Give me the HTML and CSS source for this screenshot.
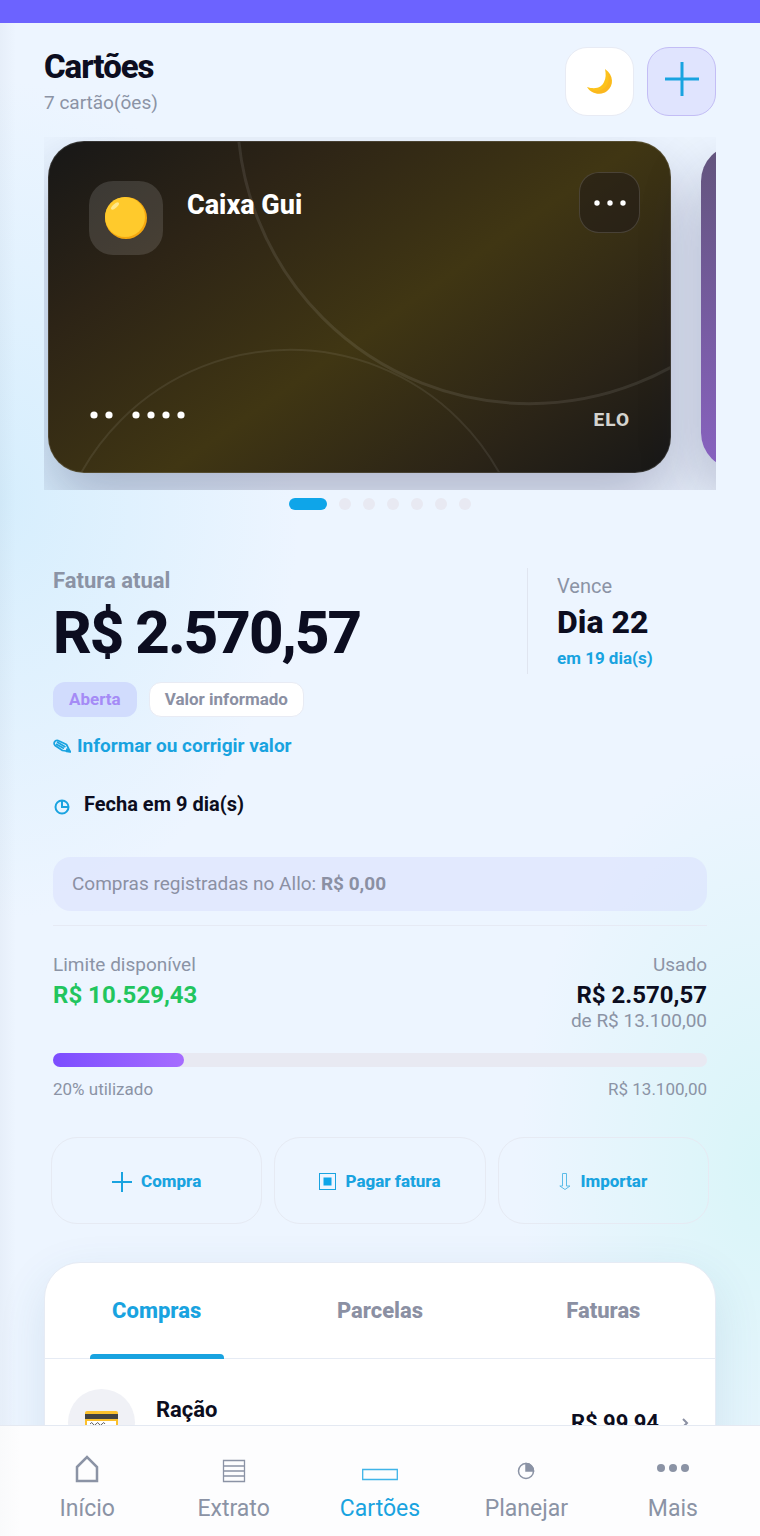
FILE: index.html
```html
<!DOCTYPE html>
<html lang="pt-BR">
<head>
    <meta charset="UTF-8">
    <meta name="viewport" content="width=device-width, initial-scale=1.0">
    <title>Cartões</title>
    <link rel="stylesheet" href="styles.css">
</head>
<body>
    <div class="status-bar"></div>

    <main class="page">
        <header class="header">
            <div>
                <h1 class="title">Cartões</h1>
                <p class="subtitle">7 cartão(ões)</p>
            </div>
            <div class="header-actions">
                <button type="button" class="icon-btn" aria-label="Tema escuro">
                    <svg width="28" height="28" viewBox="0 0 28 28">
                        <path d="M19 1c9 6 9 17 2 22-6 5-16 3-20-4 9 3 15 0 17-5 2-4 2-8 1-13z" fill="#fcc21b"/>
                        <path d="M22 4c5 7 4 15-1 19-5 4-13 3-17-1 8 2 14 0 17-5 2-4 2-8 1-13z" fill="#f9a825" opacity=".4"/>
                    </svg>
                </button>
                <button type="button" class="icon-btn icon-btn-add" aria-label="Novo cartão">
                    <svg width="34" height="34" viewBox="0 0 34 34" stroke="#19a3e0" stroke-width="3">
                        <path d="M17 0v34M0 17h34"/>
                    </svg>
                </button>
            </div>
        </header>

        <section class="carousel">
            <article class="card">
                <svg class="card-art" viewBox="0 0 623 332" preserveAspectRatio="xMidYMid slice" fill="none" stroke="#fff">
                    <circle cx="482" cy="-30" r="293" stroke-width="3" stroke-opacity=".09"/>
                    <circle cx="242" cy="449" r="240" stroke-width="2" stroke-opacity=".08"/>
                </svg>
                <div class="card-top">
                    <div class="card-avatar">
                        <svg width="42" height="42" viewBox="0 0 42 42">
                            <circle cx="21" cy="21" r="21" fill="#f4a70f"/>
                            <circle cx="20" cy="20" r="20" fill="#ffca2c"/>
                            <ellipse cx="10" cy="9" rx="5" ry="2" transform="rotate(-42 10 9)" fill="#ffe88a"/>
                        </svg>
                    </div>
                    <h2 class="card-name">Caixa Gui</h2>
                    <button type="button" class="card-menu" aria-label="Opções do cartão">
                        <svg width="32" height="6" viewBox="0 0 32 6" fill="#fff">
                            <circle cx="3" cy="3" r="2.700"/><circle cx="16" cy="3" r="2.700"/><circle cx="29" cy="3" r="2.700"/>
                        </svg>
                    </button>
                </div>
                <div class="card-bottom">
                    <svg width="98" height="14" viewBox="0 0 98 14" fill="#fff" role="img" aria-label="Número oculto">
                        <circle cx="5" cy="7" r="3.600"/><circle cx="20" cy="7" r="3.600"/>
                        <circle cx="47" cy="7" r="3.600"/><circle cx="62" cy="7" r="3.600"/>
                        <circle cx="77" cy="7" r="3.600"/><circle cx="92" cy="7" r="3.600"/>
                    </svg>
                    <span class="card-brand">ELO</span>
                </div>
            </article>
            <article class="card card-next"></article>
        </section>

        <div class="dots">
            <span class="dot dot-active"></span>
            <span class="dot"></span>
            <span class="dot"></span>
            <span class="dot"></span>
            <span class="dot"></span>
            <span class="dot"></span>
            <span class="dot"></span>
        </div>

        <section class="invoice">
            <div class="invoice-head">
                <div class="invoice-main">
                    <p class="invoice-label">Fatura atual</p>
                    <p class="invoice-amount">R$ 2.570,57</p>
                </div>
                <div class="due">
                    <p class="muted due-label">Vence</p>
                    <p class="due-day">Dia 22</p>
                    <p class="due-in">em 19 dia(s)</p>
                </div>
            </div>

            <div class="tags">
                <span class="tag tag-open">Aberta</span>
                <span class="tag tag-info">Valor informado</span>
            </div>

            <a href="#" class="edit-link">
                <svg width="18" height="14" viewBox="0 0 18 14" fill="none" stroke="#19a3e0" stroke-width="1.700" stroke-linejoin="round">
                    <path d="M1.500 3 Q2.500 1 5 1.500 L13.500 5.500 L17 12.500 L9.500 11.500 L2 6.500 Q.5 5 1.500 3z M3 5 L11 9.500 M4 3 L12.500 8"/>
                    <path d="M14 10l3.500 3-4-.5z" fill="#19a3e0"/>
                </svg>
                Informar ou corrigir valor
            </a>

            <p class="closing">
                <svg width="18" height="22" viewBox="0 0 18 22" fill="none" stroke="#19a3e0" stroke-width="2">
                    <circle cx="9" cy="14" r="6.500"/>
                    <path d="M9 7.500V14h6.500"/>
                </svg>
                Fecha em 9 dia(s)
            </p>

            <p class="note">Compras registradas no Allo: <strong>R$ 0,00</strong></p>

            <div class="limit">
                <div>
                    <p class="muted">Limite disponível</p>
                    <p class="limit-value limit-free">R$ 10.529,43</p>
                </div>
                <div class="limit-used">
                    <p class="muted">Usado</p>
                    <p class="limit-value">R$ 2.570,57</p>
                    <p class="muted">de R$ 13.100,00</p>
                </div>
            </div>

            <div class="progress"><div class="progress-fill" style="width: 20%"></div></div>
            <div class="progress-labels">
                <span>20% utilizado</span>
                <span>R$ 13.100,00</span>
            </div>
        </section>

        <div class="actions">
            <button type="button" class="action">
                <svg width="20" height="22" viewBox="0 0 20 22" stroke="#19a3e0" stroke-width="2"><path d="M10 2v20M0 12h20"/></svg>
                <span>Compra</span>
            </button>
            <button type="button" class="action">
                <svg width="17" height="19" viewBox="0 0 17 19"><rect x=".5" y="2.500" width="16" height="16" fill="none" stroke="#19a3e0"/><rect x="4.500" y="6.500" width="8" height="8" fill="#0ea5e9"/></svg>
                <span>Pagar fatura</span>
            </button>
            <button type="button" class="action">
                <svg width="12" height="19" viewBox="0 0 12 19" fill="none" stroke="#5cbce8"><path d="M3.500 2.500h4v12.500h3.500L6 18.500.8 15h2.700z"/></svg>
                <span>Importar</span>
            </button>
        </div>

        <section class="panel">
            <div class="tabs" role="tablist">
                <button type="button" class="tab tab-active" role="tab" aria-selected="true">Compras</button>
                <button type="button" class="tab" role="tab" aria-selected="false">Parcelas</button>
                <button type="button" class="tab" role="tab" aria-selected="false">Faturas</button>
            </div>
            <div class="purchase">
                <div class="purchase-icon">
                    <svg width="33" height="24" viewBox="0 0 33 24">
                        <rect width="33" height="24" rx="2" fill="#fbc02d"/>
                        <rect y="3" width="33" height="5" fill="#424242"/>
                        <rect x="2" y="10" width="29" height="7" fill="#fff"/>
                        <path d="M5 13q2-3 3 0t3 0 3 0 3 0 3 0" fill="none" stroke="#616161"/>
                    </svg>
                </div>
                <p class="purchase-name">Ração</p>
                <p class="purchase-value">R$ 99,94</p>
                <svg width="8" height="10" viewBox="0 0 8 10" fill="none" stroke="#8b90a3" stroke-width="2"><path d="M2 1l4 4-4 4"/></svg>
            </div>
        </section>
    </main>

    <nav class="nav">
        <a href="#" class="nav-item">
            <svg width="36" height="30" viewBox="0 0 36 30" fill="none" stroke="#8b93a5" stroke-width="2.500"><path d="M8 13 18 3l10 10v14H8z"/></svg>
            Início
        </a>
        <a href="#" class="nav-item">
            <svg width="36" height="30" viewBox="0 0 36 30" fill="none" stroke="#8b93a5" stroke-width="1.300"><path d="M7.500 6.500h21v21h-21zM7.500 12h21M7.500 17h21M7.500 22h21"/></svg>
            Extrato
        </a>
        <a href="#" class="nav-item nav-item-active">
            <svg width="36" height="30" viewBox="0 0 36 30" fill="none" stroke="#3fb4e8" stroke-width="1.300"><path d="M.7 15.500h34.600v10H.7z"/></svg>
            Cartões
        </a>
        <a href="#" class="nav-item">
            <svg width="36" height="30" viewBox="0 0 36 30" fill="none" stroke="#8b93a5" stroke-width="1.500"><circle cx="18" cy="17" r="7.500"/><path d="M18 9.500V17h7.500A7.500 7.500 0 0 0 18 9.500z" fill="#8b93a5"/></svg>
            Planejar
        </a>
        <a href="#" class="nav-item">
            <svg width="36" height="30" viewBox="0 0 36 30" fill="#8b93a5"><circle cx="6" cy="14" r="4"/><circle cx="18" cy="14" r="4"/><circle cx="30" cy="14" r="4"/></svg>
            Mais
        </a>
    </nav>
</body>
</html>
```

FILE: styles.css
```css
* {
    box-sizing: border-box;
}
body {
    margin: 0;
    height: 100vh;
    overflow: hidden;
    font-family: Roboto, "Liberation Sans", sans-serif;
    font-size: 19px;
    line-height: 26px;
    color: #0c0d20;
    background:
        linear-gradient(90deg, rgba(20, 30, 60, 0.03), rgba(20, 30, 60, 0) 16px),
        radial-gradient(300px 420px at 0 500px, #d6eefd, rgba(214, 238, 253, 0)),
        radial-gradient(240px 420px at 100% 1170px, #d9f5f8, rgba(217, 245, 248, 0)),
        #edf5ff;
}
h1, h2, p {
    margin: 0;
}
button {
    font-family: inherit;
    cursor: pointer;
}
.status-bar {
    height: 23px;
    background-color: #6c63ff;
}
.page {
    padding: 24px 44px 0;
}
.muted {
    color: #8b93a5;
}

/* Header */
.header {
    display: flex;
    justify-content: space-between;
    height: 90px;
}
.title {
    font-size: 33px;
    line-height: 40px;
    font-weight: 800;
    letter-spacing: -1px;
}
.subtitle {
    margin-top: 3px;
    color: #8b93a5;
}
.header-actions {
    display: flex;
    gap: 13px;
}
.icon-btn {
    display: flex;
    align-items: center;
    justify-content: center;
    width: 69px;
    height: 69px;
    padding: 0;
    border: 1px solid #e8ebf4;
    border-radius: 22px;
    background-color: #fff;
}
.icon-btn-add {
    padding-bottom: 5px;
    border: 1px solid #c3bdf5;
    background-color: #e0e4fe;
}

/* Cards */
.carousel {
    display: flex;
    align-items: center;
    gap: 30px;
    padding: 4px 4px 17px;
    overflow: hidden;
}
.card {
    position: relative;
    flex: 0 0 calc(100% - 41px);
    display: flex;
    flex-direction: column;
    justify-content: space-between;
    aspect-ratio: 623 / 332;
    padding: 30px 30px 39px 40px;
    border: 1px solid rgba(255, 255, 255, 0.12);
    border-radius: 36px;
    color: #fff;
    background: linear-gradient(145deg, #171717, #2d2416 25%, #403613 54%, #2b2417 80%, #171717) border-box;
    box-shadow: 0 30px 60px rgba(30, 28, 80, 0.28);
}
.card-next {
    aspect-ratio: 623 / 324;
    border: 0;
    background: linear-gradient(180deg, #62547c, #8862c0);
}
.card-art {
    position: absolute;
    inset: 0;
    width: 100%;
    height: 100%;
    border-radius: 36px;
}
.card-top {
    position: relative;
    display: flex;
    align-items: flex-start;
}
.card-avatar {
    display: flex;
    align-items: center;
    justify-content: center;
    width: 74px;
    height: 74px;
    margin-top: 9px;
    border-radius: 24px;
    background-color: rgba(255, 255, 255, 0.13);
}
.card-name {
    flex: 1;
    margin: 16px 0 0 24px;
    font-size: 27px;
    line-height: 34px;
    font-weight: 800;
}
.card-menu {
    display: flex;
    align-items: center;
    justify-content: center;
    width: 61px;
    height: 61px;
    padding: 0;
    border: 1px solid rgba(255, 255, 255, 0.14);
    border-radius: 20px;
    background-color: rgba(28, 22, 24, 0.5);
}
.card-bottom {
    position: relative;
    display: flex;
    justify-content: space-between;
    margin-right: 10px;
}
.card-bottom svg {
    margin-top: 1px;
}
.card-brand {
    font-weight: 800;
    letter-spacing: 1px;
    color: #d4d3cf;
}
.dots {
    display: flex;
    justify-content: center;
    gap: 12px;
    margin-top: 8px;
}
.dot {
    width: 12px;
    height: 12px;
    border-radius: 6px;
    background-color: #e8e9f2;
}
.dot-active {
    width: 38px;
    background-color: #0ea5e9;
}

/* Invoice */
.invoice {
    padding: 58px 9px 0;
}
.invoice-head {
    display: flex;
    height: 106px;
}
.invoice-main {
    flex: 1;
}
.invoice-label {
    font-size: 22px;
    font-weight: 700;
    color: #8b93a5;
}
.invoice-amount {
    margin-top: 3px;
    font-size: 60px;
    line-height: 72px;
    font-weight: 800;
    letter-spacing: -2px;
}
.due {
    width: 180px;
    padding: 5px 0 0 29px;
    border-left: 1px solid #e0e5f0;
}
.due-label {
    font-size: 20px;
}
.due-day {
    margin: 3px 0;
    font-size: 32px;
    line-height: 40px;
    font-weight: 800;
}
.due-in {
    font-size: 17px;
    font-weight: 700;
    color: #19a3e0;
}
.tags {
    display: flex;
    gap: 12px;
    margin-top: 8px;
}
.tag {
    height: 35px;
    padding: 0 15px;
    border: 1px solid transparent;
    border-radius: 12px;
    font-size: 17px;
    line-height: 33px;
    font-weight: 700;
}
.tag-open {
    color: #a58bf6;
    background-color: #d1dcfd;
}
.tag-info {
    color: #8b90a3;
    border-color: #e8ebf4;
    background-color: #fff;
}
.edit-link {
    display: flex;
    align-items: center;
    gap: 6px;
    margin-top: 16px;
    font-weight: 700;
    color: #19a3e0;
    text-decoration: none;
}
.closing {
    display: flex;
    align-items: center;
    gap: 13px;
    margin-top: 32px;
    font-size: 20px;
    font-weight: 700;
}
.note {
    margin-top: 40px;
    padding: 14px 19px;
    border-radius: 18px;
    color: #8b90a3;
    background-color: rgba(216, 222, 254, 0.5);
}
.limit {
    display: flex;
    justify-content: space-between;
    margin-top: 14px;
    padding-top: 26px;
    border-top: 1px solid #e6eaf4;
}
.limit-value {
    margin-top: 4px;
    font-size: 24px;
    font-weight: 700;
}
.limit-used {
    text-align: right;
}
.limit-free {
    color: #22c55e;
}
.progress {
    height: 14px;
    margin-top: 19px;
    border-radius: 7px;
    background-color: #e8e9f2;
}
.progress-fill {
    height: 100%;
    border-radius: 7px;
    background: linear-gradient(90deg, #7c4dff, #a66cff);
}
.progress-labels {
    display: flex;
    justify-content: space-between;
    margin-top: 9px;
    font-size: 17px;
    color: #8b93a5;
}

/* Actions */
.actions {
    display: flex;
    gap: 12px;
    margin-top: 35px;
    padding: 0 7px;
}
.action {
    flex: 1;
    display: flex;
    align-items: center;
    justify-content: center;
    gap: 9px;
    height: 87px;
    padding: 0;
    border: 1px solid #e6eaf3;
    border-radius: 26px;
    font-size: 17px;
    font-weight: 800;
    color: #19a3e0;
    background: transparent;
}

/* Purchases */
.panel {
    margin-top: 38px;
    border: 1px solid #e6ebf4;
    border-radius: 36px 36px 0 0;
    background-color: #fff;
    box-shadow: 0 16px 48px rgba(40, 100, 140, 0.12);
}
.tabs {
    display: flex;
    border-bottom: 1px solid #e6ebf4;
}
.tab {
    position: relative;
    flex: 1;
    height: 95px;
    padding: 0;
    border: 0;
    font-size: 22px;
    font-weight: 800;
    color: #8b90a3;
    background: transparent;
}
.tab-active {
    color: #19a3e0;
}
.tab-active::after {
    content: "";
    position: absolute;
    left: 20%;
    right: 20%;
    bottom: -1px;
    height: 5px;
    border-radius: 4px 4px 0 0;
    background-color: #19a3e0;
}
.purchase {
    display: flex;
    align-items: center;
    padding: 30px 26px 60px 23px;
    font-size: 22px;
    font-weight: 700;
}
.purchase-icon {
    display: flex;
    align-items: center;
    justify-content: center;
    width: 67px;
    height: 67px;
    margin-right: 21px;
    border-radius: 50%;
    background-color: #f0f1f6;
}
.purchase-name {
    flex: 1;
    padding-bottom: 26px;
}
.purchase-value {
    margin-right: 22px;
}

/* Bottom navigation */
.nav {
    position: fixed;
    left: 0;
    right: 0;
    bottom: 0;
    display: flex;
    height: 111px;
    padding: 28px 14px 0;
    border-top: 1px solid #e4e9f2;
    background: linear-gradient(90deg, #f9fafb, #fdfdfe 20px);
}
.nav-item {
    flex: 1;
    display: flex;
    flex-direction: column;
    align-items: center;
    gap: 12px;
    font-size: 23px;
    color: #8b93a5;
    text-decoration: none;
}
.nav-item-active {
    color: #19a3e0;
}
```
